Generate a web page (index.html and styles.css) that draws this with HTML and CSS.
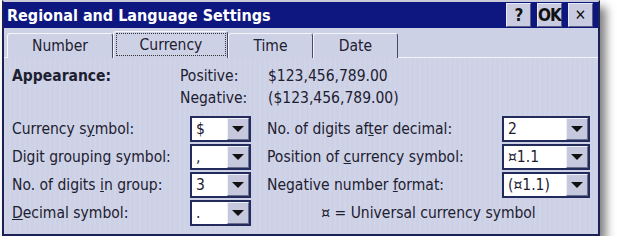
FILE: index.html
```html
<!DOCTYPE html>
<html lang="en">
<head>
  <meta charset="UTF-8">
  <title>Regional and Language Settings</title>
  <link rel="stylesheet" href="styles.css">
</head>
<body>
  <div class="dialog">
    <div class="titlebar">
      <span class="title">Regional and Language Settings</span>
      <div class="title-buttons">
        <button class="tb-btn">?</button>
        <button class="tb-btn">OK</button>
        <button class="tb-btn close">&#x2715;</button>
      </div>
    </div>

    <div class="tabs">
      <div class="tab tab-number">Number</div>
      <div class="tab tab-currency active"><span class="focus">Currency</span></div>
      <div class="tab tab-time">Time</div>
      <div class="tab tab-date">Date</div>
    </div>

    <div class="panel">
      <div class="appearance">
        <div class="appearance-label">Appearance:</div>
        <div class="sample-labels">
          <div>Positive:</div>
          <div>Negative:</div>
        </div>
        <div class="sample-values">
          <div>$123,456,789.00</div>
          <div>($123,456,789.00)</div>
        </div>
      </div>

      <div class="form">
        <label class="label">Currency s<u>y</u>mbol:</label>
        <div class="combo"><span class="combo-value">$</span><span class="combo-btn"></span></div>
        <label class="label label-r">No. of digits af<u>t</u>er decimal:</label>
        <div class="combo"><span class="combo-value">2</span><span class="combo-btn"></span></div>

        <label class="label">Digit <u>g</u>rouping symbol:</label>
        <div class="combo"><span class="combo-value">,</span><span class="combo-btn"></span></div>
        <label class="label label-r">Position of <u>c</u>urrency symbol:</label>
        <div class="combo"><span class="combo-value">&#xA4;1.1</span><span class="combo-btn"></span></div>

        <label class="label">No. of digits <u>i</u>n group:</label>
        <div class="combo"><span class="combo-value">3</span><span class="combo-btn"></span></div>
        <label class="label label-r">Negative number <u>f</u>ormat:</label>
        <div class="combo"><span class="combo-value">(&#xA4;1.1)</span><span class="combo-btn"></span></div>

        <label class="label"><u>D</u>ecimal symbol:</label>
        <div class="combo"><span class="combo-value">.</span><span class="combo-btn"></span></div>
        <div class="note">&#xA4; = Universal currency symbol</div>
      </div>
    </div>
  </div>
</body>
</html>
```

FILE: styles.css
```css
* {
  margin: 0;
  padding: 0;
  box-sizing: border-box;
}

body {
  background: #fff;
  font-family: "DejaVu Sans Condensed", "DejaVu Sans", sans-serif;
  font-size: 15.5px;
  color: #1d2030;
}

.dialog {
  width: 598px;
  height: 236px;
  margin-left: 2px;
  border: 2px solid #1b2157;
  border-top-color: #c9cbd8;
  background: #cdd1e6;
  box-shadow: 6px 7px 9px rgba(0, 0, 0, 0.5);
}

.titlebar {
  height: 26px;
  display: flex;
  align-items: center;
  justify-content: space-between;
  padding: 0 5px 0 3px;
  background: #0e177f;
}

.title {
  color: #fff;
  font-size: 16px;
  font-weight: 700;
}

.title-buttons {
  display: flex;
  gap: 6px;
}

.tb-btn {
  width: 25px;
  height: 24px;
  border: 1px solid #e8eaf4;
  border-right-color: #5a5f80;
  border-bottom-color: #5a5f80;
  background: #c9cce0;
  font-family: inherit;
  font-size: 17px;
  font-weight: 700;
  color: #111;
  letter-spacing: -1px;
}

.tb-btn.close {
  font-weight: 400;
  font-size: 15px;
  letter-spacing: 0;
}

.tabs {
  height: 30px;
  display: flex;
  align-items: flex-end;
  padding-left: 3px;
  background: linear-gradient(to top, #f4f5fb 1px, transparent 1px);
}

.tab {
  height: 25px;
  display: flex;
  align-items: center;
  justify-content: center;
  border: 1px solid #f4f5fb;
  border-right-color: #454a6c;
  border-bottom: none;
  border-radius: 3px 3px 0 0;
  background: #cdd1e6;
}

.tab-number { width: 106px; }
.tab-currency { width: 115px; }
.tab-time { width: 85px; }
.tab-date { width: 85px; }

.tab.active {
  height: 27px;
  align-items: stretch;
  padding: 1px 1px 2px 2px;
}

.focus {
  flex: 1;
  display: flex;
  align-items: center;
  justify-content: center;
  border: 1px dotted #333;
}

.panel {
  height: 176px;
  padding: 7px 0 0 8px;
  background: repeating-linear-gradient(90deg, rgba(255, 255, 255, 0.07) 0 2px, transparent 2px 5px);
}

.appearance {
  display: flex;
  line-height: 22px;
}

.appearance-label {
  width: 168px;
  font-weight: 700;
}

.sample-labels {
  width: 88px;
}

.form {
  margin-top: 7px;
  display: grid;
  grid-template-columns: 178px 61px 251px 88px;
  grid-auto-rows: 26px;
  row-gap: 2px;
  align-items: center;
}

.label-r {
  padding-left: 16px;
}

.combo {
  height: 26px;
  display: flex;
  border: 2px solid #232a5c;
  background: #fff;
}

.combo-value {
  flex: 1;
  padding-left: 4px;
  line-height: 22px;
}

.combo-btn {
  width: 22px;
  display: flex;
  align-items: center;
  justify-content: center;
  border: 1px solid #eef0f8;
  border-right-color: #6a6f90;
  border-bottom-color: #6a6f90;
  background: #c6c9dd;
}

.combo-btn::after {
  content: "";
  border-left: 6px solid transparent;
  border-right: 6px solid transparent;
  border-top: 6px solid #111;
}

.note {
  grid-column: 3 / 5;
  padding-left: 16px;
  text-align: center;
}
```
